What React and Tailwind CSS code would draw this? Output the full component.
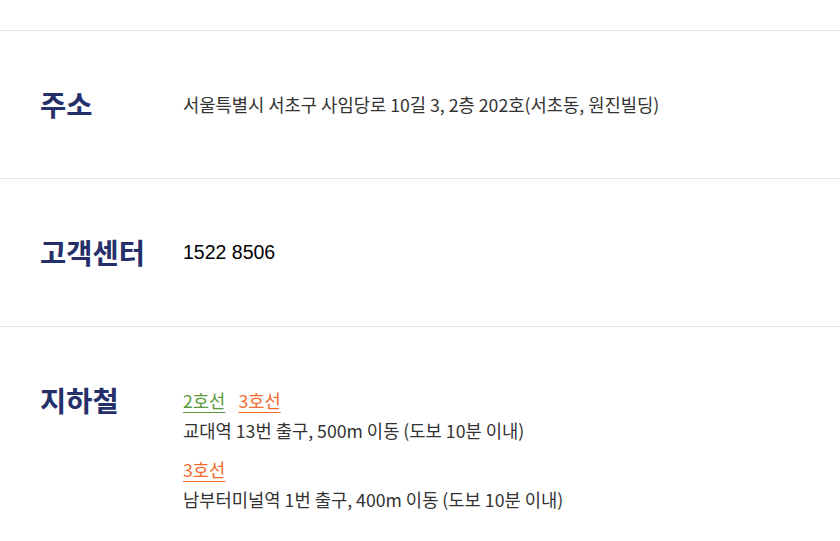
export default function App() {
  const head = "w-[143px] shrink-0 text-[28.5px] leading-[36px] font-bold text-[#25306b]";
  const font = { fontFamily: '"Noto Sans CJK KR", "Noto Sans", sans-serif' };
  return (
    <div className="w-[840px] h-[541px] overflow-hidden bg-white" style={font}>
      <div className="h-[30px]" />
      <div className="border-t border-[#e3e3e3] h-[148px] flex pl-[40px] pt-[55px]">
        <div className={head}>주소</div>
        <div className="text-[17.7px] leading-[36px] text-[#333333]">
          서울특별시 서초구 사임당로 10길 3, 2층 202호(서초동, 원진빌딩)
        </div>
      </div>
      <div className="border-t border-[#e3e3e3] h-[148px] flex pl-[40px] pt-[55px]">
        <div className={head}>고객센터</div>
        <div
          className="text-[19.5px] leading-[36px] text-black"
          style={{ fontFamily: '"Liberation Sans", Arial, sans-serif' }}
        >
          1522 8506
        </div>
      </div>
      <div className="border-t border-[#e3e3e3] flex pl-[40px] pt-[55px]">
        <div className={head}>지하철</div>
        <div className="text-[17.7px] text-[#333333] pt-[3px]">
          <div className="leading-[30px] flex gap-[13px]">
            <span className="text-[#5a9a3a] underline underline-offset-[4px]">2호선</span>
            <span className="text-[#f06b2c] underline underline-offset-[4px]">3호선</span>
          </div>
          <div className="leading-[30px]">교대역 13번 출구, 500m 이동 (도보 10분 이내)</div>
          <div className="leading-[30px] mt-[9px]">
            <span className="text-[#f06b2c] underline underline-offset-[4px]">3호선</span>
          </div>
          <div className="leading-[30px]">남부터미널역 1번 출구, 400m 이동 (도보 10분 이내)</div>
        </div>
      </div>
    </div>
  );
}
